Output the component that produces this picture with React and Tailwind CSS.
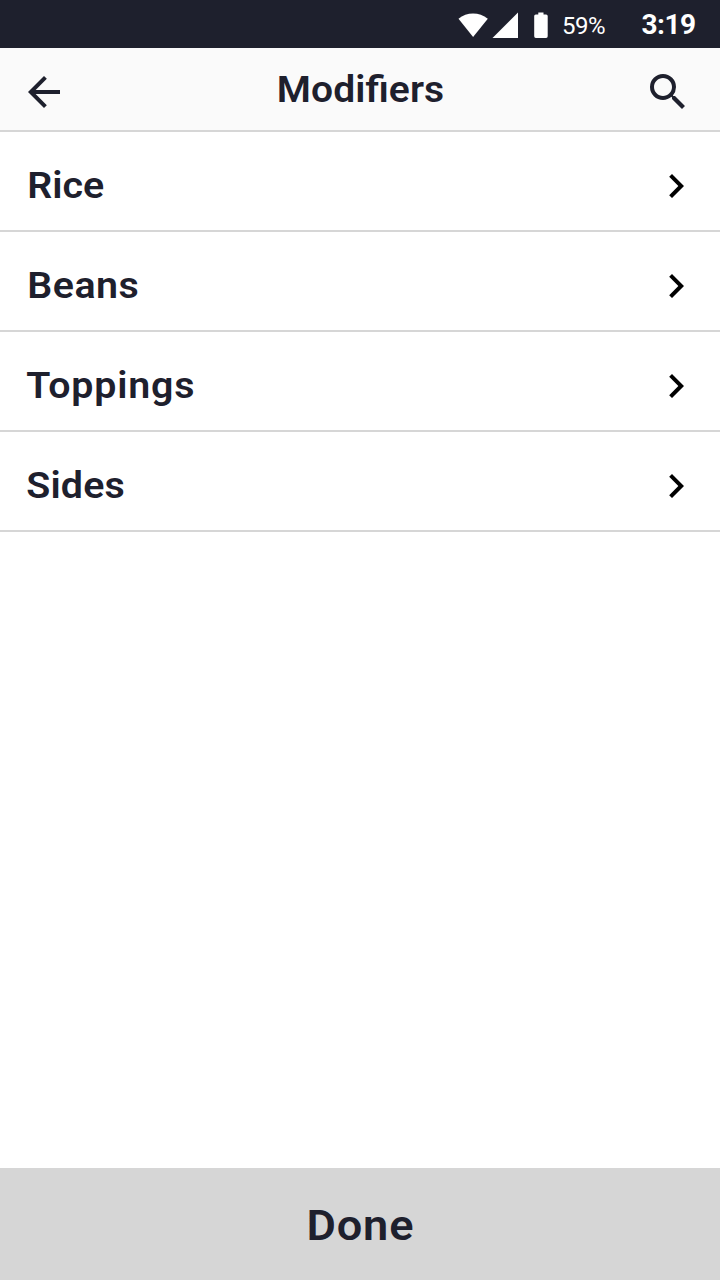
const sections = [
  { name: "Rice", spacing: "pl-[26px] tracking-[0px]" },
  { name: "Beans", spacing: "pl-[26px] tracking-[0.45px]" },
  { name: "Toppings", spacing: "pl-[25px] tracking-[0.75px]" },
  { name: "Sides", spacing: "pl-[25px] tracking-[0.15px]" },
];

function StatusBar() {
  return (
    <div className="flex h-12 shrink-0 items-center bg-[#1e202d] pl-[458px] text-white">
      <svg className="h-12 w-[92px] shrink-0" viewBox="0 0 92 48" fill="currentColor" aria-hidden="true">
        <path d="M0.5 18.7C8.6 11.6 21.4 11.6 29.8 18.7L15.1 37Z" />
        <path d="M34.5 38L60 12.5V38Z" />
        <path d="M80.3 12.5h5.2v2h2.6q1.6 0 1.6 1.6v20.2q0 1.7-1.6 1.7H77.8q-1.6 0-1.6-1.7V16.1q0-1.6 1.6-1.6h2.5z" />
      </svg>
      <span className="ml-3 w-[79.5px] pt-1 text-[24px] leading-none tracking-[-0.5px]">59%</span>
      <span className="pt-0.5 text-[28px] leading-none font-bold tracking-[-0.5px]">3:19</span>
    </div>
  );
}

function Header() {
  return (
    <header className="flex h-[84px] shrink-0 items-center justify-between border-b-2 border-[#d6d6d6] bg-[#fafafa] pr-7 pl-5">
      <button aria-label="Back" className="mt-1.5">
        <svg className="size-12" viewBox="0 0 24 24" fill="currentColor">
          <path d="M20 11H7.83l5.59-5.59L12 4l-8 8 8 8 1.41-1.41L7.83 13H20v-2z" />
        </svg>
      </button>
      <h1 className="mt-0.5 ml-2.5 scale-x-[1.04] text-[37.5px] leading-none font-semibold tracking-[0.1px] [font-feature-settings:'liga'_1]">Modifiers</h1>
      <button aria-label="Search" className="mt-1.5">
        <svg className="size-12" viewBox="0 0 24 24" fill="currentColor">
          <path d="M15.5 14h-.79l-.28-.27A6.471 6.471 0 0 0 16 9.5 6.5 6.5 0 1 0 9.5 16c1.61 0 3.09-.59 4.23-1.57l.27.28v.79l5 4.99L20.49 19l-4.99-5zm-6 0C7.01 14 5 11.99 5 9.5S7.01 5 9.5 5 14 7.01 14 9.5 11.99 14 9.5 14z" />
        </svg>
      </button>
    </header>
  );
}

export default function App() {
  return (
    <div className="flex h-[1280px] w-[720px] flex-col overflow-hidden bg-white font-['Roboto',sans-serif] text-[#1e202d]">
      <StatusBar />
      <Header />
      <main className="flex-1">
        {sections.map(({ name, spacing }) => (
          <button key={name} className="flex h-[100px] w-full items-center justify-between border-b-2 border-[#d6d6d6] pt-2.5 pr-5">
            <span className={`origin-left scale-x-[1.05] text-[37.5px] leading-none font-semibold ${spacing}`}>{name}</span>
            <svg className="size-12 text-black" viewBox="0 0 24 24" fill="currentColor" aria-hidden="true">
              <path d="M10 6L8.59 7.41 13.17 12l-4.58 4.59L10 18l6-6z" />
            </svg>
          </button>
        ))}
      </main>
      <button className="flex h-28 shrink-0 items-center justify-center bg-[#d6d6d6] pt-0.5 text-[43px] leading-none font-semibold">
        <span className="scale-x-[1.05] tracking-[0.8px]">Done</span>
      </button>
    </div>
  );
}
